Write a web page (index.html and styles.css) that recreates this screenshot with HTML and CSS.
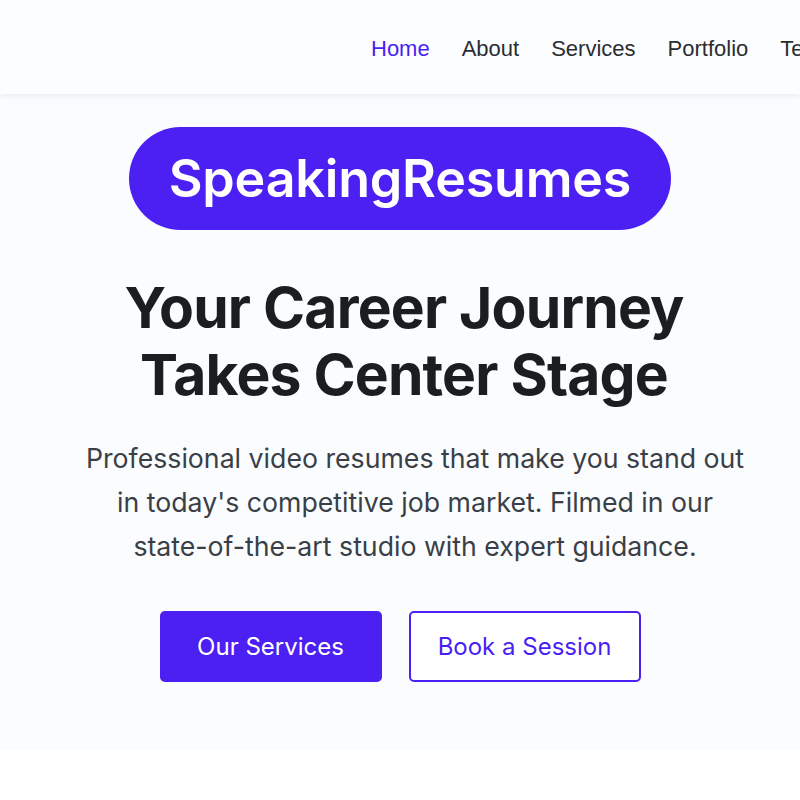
FILE: index.html
```html
<!DOCTYPE html>
<html lang="en">
<head>
<meta charset="utf-8">
<title>SpeakingResumes</title>
<link rel="stylesheet" href="styles.css">
</head>
<body>
<header class="site-header">
  <nav class="nav">
    <a class="nav-link active" href="#">Home</a>
    <a class="nav-link" href="#">About</a>
    <a class="nav-link" href="#">Services</a>
    <a class="nav-link" href="#">Portfolio</a>
    <a class="nav-link" href="#">Te</a>
  </nav>
</header>
<section class="hero">
  <div class="badge">SpeakingResumes</div>
  <h1 class="title">Your Career Journey<br>Takes Center Stage</h1>
  <p class="lead">Professional video resumes that make you stand out in today's competitive job market. Filmed in our state-of-the-art studio with expert guidance.</p>
  <div class="actions">
    <a class="btn btn-primary" href="#">Our Services</a>
    <a class="btn btn-outline" href="#">Book a Session</a>
  </div>
</section>
</body>
</html>
```
FILE: styles.css
```css
* { box-sizing: border-box; }
html, body { margin: 0; padding: 0; }
body {
  background: #ffffff;
  font-family: Inter, "Liberation Sans", sans-serif;
  overflow: hidden;
  width: 800px;
}
.site-header {
  height: 94px;
  background: #fcfdfe;
  box-shadow: 0 2px 6px rgba(0,0,0,0.07);
  display: flex;
  align-items: center;
  overflow: hidden;
  position: relative;
  z-index: 1;
  padding-top: 4px;
}
.nav {
  display: flex;
  gap: 32px;
  padding-left: 371px;
  white-space: nowrap;
}
.nav-link {
  font-family: "Liberation Sans", Arial, sans-serif;
  font-size: 22px;
  color: #2a2d33;
  text-decoration: none;
}
.nav-link.active { color: #4a1ff2; }
.hero {
  background: #fafcfe;
  height: 656px;
  display: flex;
  flex-direction: column;
  align-items: center;
  padding-top: 33px;
}
.badge {
  width: 542px;
  height: 103px;
  border-radius: 52px;
  background: #4c1ff2;
  color: #fff;
  font-size: 52px;
  font-weight: 600;
  display: flex;
  align-items: center;
  justify-content: center;
  letter-spacing: -0.2px;
}
.title {
  margin: 44px 0 0;
  font-size: 57px;
  line-height: 67px;
  font-weight: 700;
  color: #1b1d21;
  text-align: center;
  letter-spacing: -0.8px;
  padding-left: 8px;
}
.lead {
  margin: 28px 0 0;
  width: 700px;
  font-size: 26.7px;
  line-height: 44px;
  color: #3a3f47;
  text-align: center;
  padding-left: 30px;
}
.actions {
  margin-top: 43px;
  display: flex;
  gap: 27px;
}
.btn {
  height: 71px;
  display: flex;
  align-items: center;
  justify-content: center;
  font-size: 24px;
  border-radius: 5px;
  text-decoration: none;
}
.btn-primary {
  width: 222px;
  background: #4c1ff2;
  color: #fff;
}
.btn-outline {
  width: 232px;
  background: #fff;
  color: #4a1ff2;
  border: 2px solid #4c1ff2;
}
```
